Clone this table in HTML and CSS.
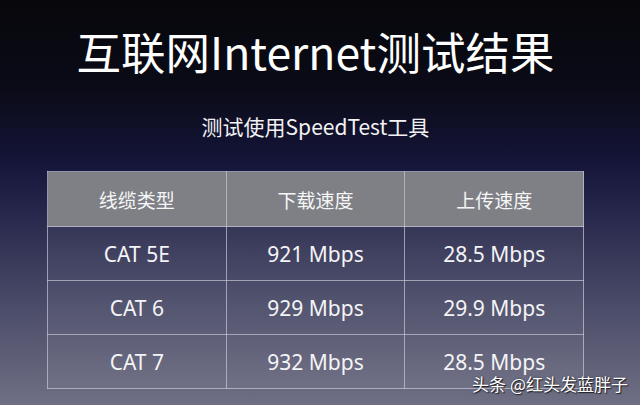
FILE: index.html
```html
<!DOCTYPE html>
<html lang="zh">
<head>
<meta charset="utf-8">
<link rel="stylesheet" href="styles.css">
</head>
<body>
<div class="slide">
  <h1 class="title">互联网Internet测试结果</h1>
  <p class="subtitle">测试使用SpeedTest工具</p>
  <table class="results">
    <thead>
      <tr><th>线缆类型</th><th>下载速度</th><th>上传速度</th></tr>
    </thead>
    <tbody>
      <tr><td>CAT 5E</td><td>921 Mbps</td><td>28.5 Mbps</td></tr>
      <tr><td>CAT 6</td><td>929 Mbps</td><td>29.9 Mbps</td></tr>
      <tr><td>CAT 7</td><td>932 Mbps</td><td>28.5 Mbps</td></tr>
    </tbody>
  </table>
  <div class="watermark">头条 @红头发蓝胖子</div>
</div>
</body>
</html>
```
FILE: styles.css
```css
html, body {
  margin: 0;
  padding: 0;
}
body {
  width: 640px;
  height: 405px;
  overflow: hidden;
  font-family: "Noto Sans", "Noto Sans CJK SC", sans-serif;
  color: #f4f4f6;
}
.slide {
  position: relative;
  width: 640px;
  height: 405px;
  box-sizing: border-box;
  padding: 26px 9px 0 0;
  display: flex;
  flex-direction: column;
  align-items: center;
  background: linear-gradient(180deg, #07070b 0%, #0b0b18 22%, #141538 40%, #2a2b4e 55%, #4a4b68 75%, #6f6f84 100%);
}
.title {
  margin: 0;
  font-family: "Noto Sans CJK SC", sans-serif;
  font-weight: 400;
  font-size: 44.5px;
  line-height: 50px;
  color: #ffffff;
}
.subtitle {
  margin: 37px 0 0 0;
  font-family: "Noto Sans CJK SC", sans-serif;
  font-size: 21px;
  line-height: 26px;
  color: #f2f2f4;
}
.results {
  margin-top: 32px;
  border-collapse: collapse;
  width: 537px;
  table-layout: fixed;
}
.results th,
.results td {
  border: 1px solid rgba(200, 200, 215, 0.7);
  text-align: center;
  padding: 0;
  height: 53px;
}
.results th {
  height: 54px;
  background: #7e8086;
  font-family: "Noto Sans CJK SC", sans-serif;
  font-weight: 400;
  font-size: 19px;
  color: #f6f6f6;
}
.results td {
  background: rgba(255, 255, 255, 0.05);
  font-size: 21px;
  color: #f4f4f6;
}
.watermark {
  position: absolute;
  right: 12px;
  bottom: 11px;
  font-family: "Noto Sans CJK SC", sans-serif;
  font-size: 17px;
  line-height: 20px;
  color: #ffffff;
  text-shadow: 1px 1px 1px rgba(0, 0, 0, 0.7), 0 0 2px rgba(0, 0, 0, 0.5);
}
```
